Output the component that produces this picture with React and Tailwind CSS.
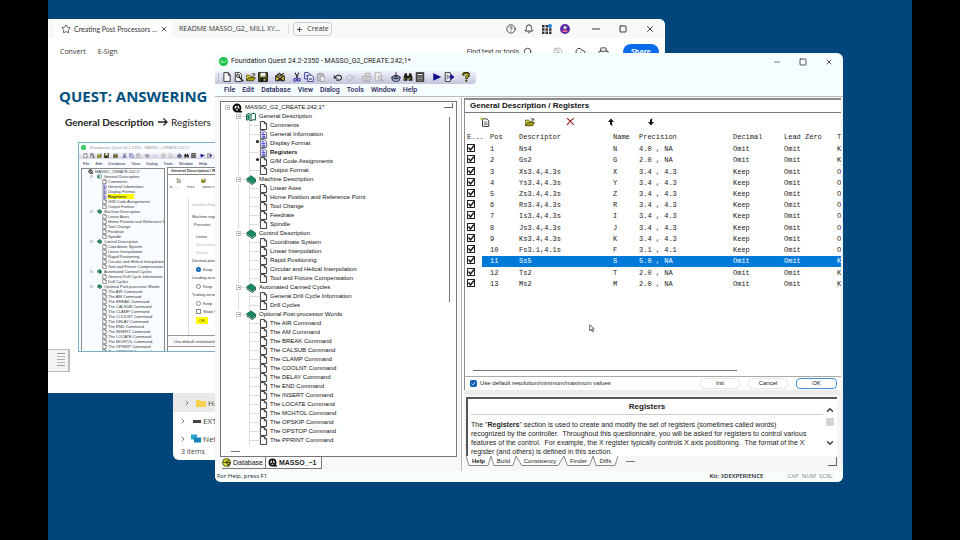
import React, { useState } from 'react';
import { Star, X, Plus, CircleHelp, Bell, Search, Save, CloudUpload, Printer, Minus, Square, ChevronRight, ChevronUp, ChevronDown } from 'lucide-react';

const TREE = [
  {
    label: 'General Description',
    open: true,
    items: [
      { label: 'Comments' },
      { label: 'General Information', filled: true },
      { label: 'Display Format', filled: true, mark: true },
      { label: 'Registers', filled: true, active: true },
      { label: 'G/M Code Assignments', mark: true },
      { label: 'Output Format' },
    ],
  },
  {
    label: 'Machine Description',
    items: [
      { label: 'Linear Axes' },
      { label: 'Home Position and Reference Point' },
      { label: 'Tool Change' },
      { label: 'Feedrate' },
      { label: 'Spindle' },
    ],
  },
  {
    label: 'Control Description',
    items: [
      { label: 'Coordinate System' },
      { label: 'Linear Interpolation' },
      { label: 'Rapid Positioning' },
      { label: 'Circular and Helical Interpolation' },
      { label: 'Tool and Fixture Compensation' },
    ],
  },
  {
    label: 'Automated Canned Cycles',
    items: [{ label: 'General Drill Cycle Information' }, { label: 'Drill Cycles' }],
  },
  {
    label: 'Optional Post-processor Words',
    items: ['AIR', 'AM', 'BREAK', 'CALSUB', 'CLAMP', 'COOLNT', 'DELAY', 'END', 'INSERT', 'LOCATE', 'MCHTOL', 'OPSKIP', 'OPSTOP', 'PPRINT'].map(
      (word) => ({ label: `The ${word} Command` })
    ),
  },
];

const REGISTERS = [
  ['1', 'Ns4', 'N', '4.0 , NA', 'Omit', 'Omit', 'K'],
  ['2', 'Gs2', 'G', '2.0 , NA', 'Omit', 'Omit', 'K'],
  ['3', 'Xs3.4,4.3s', 'X', '3.4 , 4.3', 'Keep', 'Omit', 'O'],
  ['4', 'Ys3.4,4.3s', 'Y', '3.4 , 4.3', 'Keep', 'Omit', 'O'],
  ['5', 'Zs3.4,4.3s', 'Z', '3.4 , 4.3', 'Keep', 'Omit', 'O'],
  ['6', 'Rs3.4,4.3s', 'R', '3.4 , 4.3', 'Keep', 'Omit', 'O'],
  ['7', 'Is3.4,4.3s', 'I', '3.4 , 4.3', 'Keep', 'Omit', 'O'],
  ['8', 'Js3.4,4.3s', 'J', '3.4 , 4.3', 'Keep', 'Omit', 'O'],
  ['9', 'Ks3.4,4.3s', 'K', '3.4 , 4.3', 'Keep', 'Omit', 'O'],
  ['10', 'Fs3.1,4.1s', 'F', '3.1 , 4.1', 'Keep', 'Omit', 'O'],
  ['11', 'Ss5', 'S', '5.0 , NA', 'Omit', 'Omit', 'K'],
  ['12', 'Ts2', 'T', '2.0 , NA', 'Omit', 'Omit', 'K'],
  ['13', 'Ms2', 'M', '2.0 , NA', 'Omit', 'Omit', 'K'],
];

const ICONS = {
  new: <path d="M3 1h7l3 3v11H3zM10 1v4h3" fill="#fff" stroke="#222" strokeWidth="1.4" />,
  wizard: (
    <>
      <path d="M2 1h7l3 3v11H2z" fill="#fff" stroke="#222" strokeWidth="1.4" />
      <circle cx="6.5" cy="6" r="2.6" fill="#bbb" stroke="#222" strokeWidth="1.3" />
      <path d="M8 8l7 7" stroke="#222" strokeWidth="2.2" />
    </>
  ),
  open: (
    <>
      <path d="M1 14V5h5l1 2h5v2" fill="#e8e04a" stroke="#444400" strokeWidth="1.2" />
      <path d="M1 14l3-5h11l-3 5z" fill="#a8a010" stroke="#333300" strokeWidth="1.2" />
      <path d="M9 3q3-2 5 2m0 0V2m0 3h-3" fill="none" stroke="#222" strokeWidth="1.2" />
    </>
  ),
  save: (
    <>
      <path d="M1 1h14v14H1z" fill="#5c5c18" stroke="#111" strokeWidth="1.6" />
      <path d="M4 1h8v6H4z" fill="#eee" />
      <path d="M4 10h8v5H4z" fill="#111" />
      <path d="M9 11h2v3H9z" fill="#eee" />
    </>
  ),
  database: (
    <>
      <path d="M1 14V6h14v8z" fill="#c9b634" stroke="#222" strokeWidth="1.5" />
      <path d="M3 5l4-3 3 3 4-3M2 7l11 7M13 7L4 14" stroke="#222" strokeWidth="1.8" fill="none" />
    </>
  ),
  cut: (
    <>
      <path d="M5 1l4 9M11 1L7 10" stroke="#223" strokeWidth="1.8" />
      <circle cx="5" cy="12.5" r="2.2" fill="none" stroke="#2a2a9c" strokeWidth="1.7" />
      <circle cx="11" cy="12.5" r="2.2" fill="none" stroke="#2a2a9c" strokeWidth="1.7" />
    </>
  ),
  copy: (
    <>
      <path d="M1 1h6l3 3v7H1z" fill="#fff" stroke="#28288a" strokeWidth="1.4" />
      <path d="M6 5h6l3 3v7H6z" fill="#fff" stroke="#28288a" strokeWidth="1.4" />
      <path d="M3 5h3M3 7h3M8 10h5M8 12h5" stroke="#28288a" />
    </>
  ),
  paste: (
    <>
      <path d="M2 3h10v11H2z" fill="#c4c4cc" stroke="#999" strokeWidth="1.4" />
      <path d="M5 1h4v3H5z" fill="#aaa" />
      <path d="M7 7h7v8H7z" fill="#eee" stroke="#999" strokeWidth="1.2" />
    </>
  ),
  undo: <path d="M2 5v5h5M3 9q4-6 9-3 4 4-1 7H5" fill="none" stroke="#333" strokeWidth="1.7" />,
  redo: <path d="M14 5v5H9M13 9Q9 3 4 6q-4 4 1 7h6" fill="none" stroke="#b8b8c4" strokeWidth="1.5" />,
  print: <path d="M4 7l2-5h7l-2 5M1 7h13v6H1zM4 10h7M3 15h9" fill="#ddd" stroke="#aaa" strokeWidth="1.4" />,
  preview: (
    <>
      <path d="M2 1h8l2 3v10H2z" fill="#eee" stroke="#aaa" strokeWidth="1.3" />
      <circle cx="9" cy="9" r="3" fill="#ddd" stroke="#aaa" strokeWidth="1.3" />
      <path d="M11 11l4 4" stroke="#aaa" strokeWidth="2" />
    </>
  ),
  pack: (
    <>
      <path d="M1 8l7-3 7 3-2 6-5 2-6-3z" fill="#9aa6c4" stroke="#223" strokeWidth="1.3" />
      <path d="M8 0v8M5 5l3 4 3-4M2 9l6 2 6-2" stroke="#223" strokeWidth="1.4" fill="none" />
    </>
  ),
  find: (
    <>
      <path d="M3 2h3l1 5v7H1V8zM10 2h3l2 6v6H9V7zM6 6h4v4H6z" fill="#1c1c14" />
      <path d="M3 9v3M11 9v3" stroke="#b7a83a" strokeWidth="1.6" />
    </>
  ),
  calc: (
    <>
      <path d="M2 1h12v14H2z" fill="#444" stroke="#222" strokeWidth="1.3" />
      <path d="M4 3h8v2H4z" fill="#dfe8df" />
      <path d="M4 8h2m1 0h2m1 0h2M4 10.500h2m1 0h2m1 0h2M4 13h2m1 0h2m1 0h2" stroke="#ccc" strokeWidth="1.4" />
    </>
  ),
  play: <path d="M2 2l13 6-13 6z" fill="#10108c" />,
  exit: (
    <>
      <path d="M2 1h8v14H2z" fill="#fff" stroke="#333" strokeWidth="1.5" />
      <path d="M4 4h3v8H4z" fill="#99a" />
      <path d="M6 8h5V4l5 4-5 4V8" fill="#10108c" stroke="#10108c" strokeWidth="1.2" />
    </>
  ),
  help: (
    <>
      <path d="M4 6V3q4-3 8 0v3L9 8v3" fill="none" stroke="#333300" strokeWidth="4" />
      <path d="M4.500 5.500V4q3-2 7 0v2L9 8v2" fill="none" stroke="#d8d020" strokeWidth="1.600" />
      <circle cx="8.500" cy="13.800" r="1.900" fill="#444400" />
    </>
  ),
  add: (
    <>
      <path d="M4 3h7l3 3v9H4z" fill="#fff" stroke="#333" strokeWidth="1.5" />
      <path d="M6 8h6M6 10h6M6 12h6" stroke="#555" />
      <path d="M0 3h6M3 0v6M1 1l4 4M5 1L1 5" stroke="#b9b92c" />
    </>
  ),
  remove: <path d="M2 2l12 12M14 2q-7 5-12 12" fill="none" stroke="#a01818" strokeWidth="2" />,
  up: <path d="M8 1l6 7H10v3q0 3 2 4-6 0-6-4V8H2z" fill="#111" />,
  down: <path d="M8 15l6-7H10V5q0-3 2-4-6 0-6 4v3H2z" fill="#111" />,
  page: <path d="M2.500 1h7l4 4v10h-11zM9.500 1v4h4" fill="#fff" stroke="#333" strokeWidth="1.7" />,
  pageFilled: (
    <>
      <path d="M2.500 1h7l4 4v10h-11z" fill="#e4e4ff" stroke="#555" strokeWidth="1.5" />
      <path d="M5 5h4M5 8h6M5 11h6M6 13h5" stroke="#4040d0" strokeWidth="1.7" />
    </>
  ),
  book: (
    <>
      <path d="M1 6l7-5 8 6-6 6z" fill="#168a64" stroke="#0a4a38" />
      <path d="M1 6v4l9 6 6-5V7l-6 6z" fill="#0c5a44" />
      <path d="M2 8.500l8 5.500 5-4" stroke="#d8e8e0" fill="none" />
    </>
  ),
  bookOpen: (
    <>
      <path d="M1 4q4-3 7 0 3-4 7-1v10q-4-2-7 1-3-3-7-1z" fill="#fff" stroke="#0c5a44" strokeWidth="1.6" />
      <path d="M8 4v10" stroke="#0c5a44" strokeWidth="1.600" />
      <path d="M2 5q2-2 4 0v7q-2-1-4 0z" fill="#168a64" />
    </>
  ),
  wheel: (
    <>
      <circle cx="8" cy="8" r="5.500" fill="#fff" stroke="#111" strokeWidth="3.200" />
      <path d="M8 7V3M8 8l-4 3M8 8l4 3" stroke="#111" strokeWidth="2" />
      <path d="M10 14h6" stroke="#111" strokeWidth="2.500" />
    </>
  ),
  globe: (
    <>
      <circle cx="8" cy="8" r="7" fill="#d8dc28" stroke="#444410" strokeWidth="1.500" />
      <path d="M2 7q7 2 10-4M8 8h7l-3 6z" fill="none" stroke="#44441c" strokeWidth="2" />
    </>
  ),
};

function Icon({ name, className = 'size-[10px]' }) {
  return (
    <svg viewBox="0 0 16 16" className={`shrink-0 ${className}`} fill="none" aria-hidden="true">
      {ICONS[name]}
    </svg>
  );
}

const TOOLBAR = [
  ['new', 'wizard', 'open', 'save'],
  ['database'],
  ['cut', 'copy', 'paste'],
  ['undo', 'redo'],
  ['print', 'preview'],
  ['pack', 'find', 'calc'],
  ['play', 'exit'],
  ['help'],
];

const MENUS = ['File', 'Edit', 'Database', 'View', 'Dialog', 'Tools', 'Window', 'Help'];

function QuestLogo({ className }) {
  return (
    <svg viewBox="0 0 16 16" className={className} aria-hidden="true">
      <circle cx="8" cy="8" r="8" fill="#1fbf4c" />
      <path d="M3 9c2-5 4-3 5-1s3 2 5-2M4 10h4" stroke="#c8f5d4" strokeWidth="1.500" fill="none" />
    </svg>
  );
}

/* Acrobat window */

function SlideTree() {
  return (
    <div className="min-w-0 flex-1 overflow-hidden border border-b-0 border-[#8a8a8a] pl-1 text-[4px] leading-[5px] text-[#333]">
      <div className="flex h-[5px] items-center gap-0.5 whitespace-nowrap pl-0.5">
        <Icon name="wheel" className="size-[5px]" />
        MASSO_CREATE.242:1*
      </div>
      {TREE.map((group) => (
        <div key={group.label}>
          <div className="flex h-[5px] items-center gap-0.5 whitespace-nowrap pl-1">
            <span className="size-[3px] border border-[#ccc]" />
            <Icon name={group.open ? 'bookOpen' : 'book'} className="ml-0.5 size-[5px]" />
            {group.label}
          </div>
          {group.items.map((item) => (
            <div key={item.label} className="flex h-[5px] items-center gap-px whitespace-nowrap pl-4">
              <Icon name={item.filled ? 'pageFilled' : 'page'} className="size-[5px]" />
              <span className={item.active ? 'bg-[#ffff00] pr-2 font-bold' : ''}>{item.label}</span>
            </div>
          ))}
        </div>
      ))}
    </div>
  );
}

function SlideRadio({ title, checked }) {
  return (
    <fieldset className="flex flex-col gap-1">
      <legend className="mb-1 whitespace-nowrap">{title}</legend>
      <label className="flex items-center gap-0.5 pl-1">
        <input
          type="radio"
          name={title}
          defaultChecked={checked}
          className="size-[5px] appearance-none rounded-full border border-[#888] checked:border-2 checked:border-[#1068c0]"
        />
        Keep
      </label>
    </fieldset>
  );
}

function SlideShot() {
  return (
    <div className="flex h-[210px] flex-col overflow-hidden border border-[#7fb0c6] bg-[#fafdff] font-['Liberation_Sans',sans-serif] text-[4px] leading-[5px] text-[#333]">
      <div className="flex h-2 shrink-0 items-center gap-1 whitespace-nowrap pl-0.5 text-[#999]">
        <QuestLogo className="size-[5px]" />
        Foundation Quest 24.1-2330 - MASSO_CREATE.242:1*
      </div>
      <div className="flex h-2 shrink-0 items-center gap-1 bg-gradient-to-b from-white to-[#d5d5ea] pl-1">
        {TOOLBAR.map((group) => (
          <span key={group[0]} className="flex gap-0.5">
            {group.map((name) => (
              <Icon key={name} name={name} className="size-[5px]" />
            ))}
          </span>
        ))}
      </div>
      <div className="flex h-2 shrink-0 items-center gap-1.5 pl-1 text-[#22224c]">
        {MENUS.map((menu) => (
          <span key={menu}>{menu}</span>
        ))}
      </div>
      <div className="flex min-h-0 flex-1 gap-0.5 pl-0.5">
        <div className="flex w-[84px] shrink-0 pt-px">
          <SlideTree />
        </div>
        <div className="flex min-w-0 flex-1 flex-col border-l border-t border-[#888] bg-white">
          <div className="border-b border-[#888] pl-[3px] leading-[6px] font-bold whitespace-nowrap">General Description / Registers</div>
          <div className="flex h-[10px] items-center gap-5 pl-2">
            <Icon name="add" className="size-[5px]" />
            <Icon name="open" className="size-[5px]" />
          </div>
          <div className="flex gap-2 pl-0.5 font-['Liberation_Mono',monospace] whitespace-nowrap">
            <span>E...</span>
            <span>Pos</span>
            <span>Descriptor</span>
          </div>
          <div className="mt-2 ml-5 flex flex-1 flex-col gap-[3px] overflow-hidden border-l border-[#ddd] pt-1 pl-[3px] whitespace-nowrap">
            <div className="text-[#aaa]">Initialize Register</div>
            <div className="mt-1">Machine registers</div>
            <div className="pl-0.5">Precision</div>
            <div className="mt-1 pl-1">Linear</div>
            <div className="pl-1 text-[#bbb]">Secondary</div>
            <div className="pl-1 text-[#bbb]">Rotary</div>
            <SlideRadio title="Decimal point" checked />
            <SlideRadio title="Leading zeros" />
            <SlideRadio title="Trailing zeros" />
            <label className="flex items-center gap-0.5 pl-1">
              <input type="checkbox" className="size-[5px] appearance-none border border-[#888]" />
              Show V
            </label>
            <div className="ml-1 w-3 shrink-0 bg-[#ffff00] text-center leading-[7px]">OK</div>
          </div>
          <label className="flex h-[12px] shrink-0 items-center gap-0.5 border-y border-[#999] bg-[#fafafa] pl-1 whitespace-nowrap">
            <input type="checkbox" defaultChecked className="size-1 appearance-none bg-[#0b62b8]" />
            Use default resolution/minimum
          </label>
          <div className="h-1 shrink-0" />
        </div>
      </div>
    </div>
  );
}

function AcrobatWindow() {
  return (
    <section className="absolute top-[19px] right-[247px] bottom-[147px] left-0 flex flex-col overflow-hidden rounded-r-md bg-white font-['Open_Sans',sans-serif] text-[#333]">
      <header className="flex h-[19px] shrink-0 items-center bg-[#f8f8f8] pt-px text-[7px]">
        <div className="ml-1.5 flex h-full w-[118px] items-center bg-white pl-[7px]">
          <Star className="size-[10px] shrink-0" strokeWidth={1.8} />
          <span className="ml-[3px] flex-1 font-['Lato',sans-serif] whitespace-nowrap">Creating Post Processors ...</span>
          <button aria-label="Close tab" className="mr-1 shrink-0">
            <X className="size-2" strokeWidth={2.5} />
          </button>
        </div>
        <span className="w-[117px] border-r border-[#ddd] pl-[7px] whitespace-nowrap">README MASSO_G2_ MILL XY...</span>
        <button className="ml-1 flex h-[14px] w-[39px] items-center justify-center gap-1 rounded-sm border border-[#ccc]">
          <Plus className="size-[7px]" strokeWidth={3} />
          Create
        </button>
        <div className="ml-auto flex items-center gap-2 pr-[10px]">
          <button aria-label="Help"><CircleHelp className="size-[10px]" strokeWidth={2} /></button>
          <button aria-label="Notifications"><Bell className="size-[10px]" strokeWidth={2.4} /></button>
          <button aria-label="Apps">
            <svg viewBox="0 0 10 10" className="size-[10px]" fill="#333">
              <path d="M0 1h2.500v2.500H0zM3.500 1h2.500v2.500H3.500zM0 4.200h2.500v2.500H0zM3.500 4.200h2.500v2.500H3.500zM7 4.200h2.500v2.500H7zM0 7.500h2.500v2.500H0zM3.500 7.500h2.500v2.500H3.500zM7 7.500h2.500v2.500H7z" />
              <circle cx="8" cy="2" r="2" fill="#1c84e8" />
            </svg>
          </button>
          <button aria-label="Account">
            <svg viewBox="0 0 10 10" className="size-[10px]">
              <circle cx="5" cy="5" r="5" fill="#5b2ba8" />
              <circle cx="5" cy="3.500" r="1.600" fill="#d8e0d0" />
              <path d="M2 8q3-5 6 0z" fill="#e6688c" />
            </svg>
          </button>
          <button aria-label="Minimize" className="ml-3"><Minus className="size-3" strokeWidth={2} /></button>
          <button aria-label="Maximize" className="ml-[9px]"><Square className="size-2" strokeWidth={3} /></button>
          <button aria-label="Close" className="ml-[10px]"><X className="size-[10px]" strokeWidth={2.2} /></button>
        </div>
      </header>
      <div className="flex h-[28px] shrink-0 items-center text-[7px]">
        <button className="ml-3">Convert</button>
        <button className="ml-3">E-Sign</button>
        <div className="ml-auto flex items-center pr-[6px]">
          <span className="font-['Roboto',sans-serif]">Find text or tools</span>
          <Search className="ml-1 size-[10px]" />
          <Save className="ml-5 size-[10px] text-[#aaa]" />
          <CloudUpload className="ml-3 size-[11px]" />
          <Printer className="ml-3 size-[11px]" />
          <button className="ml-[14px] h-4 w-9 rounded-full bg-[#0a6cea] font-bold text-white">Share</button>
        </div>
      </div>
      <div className="mt-[20px] ml-[11px] font-['Open_Sans',sans-serif] text-[15px] leading-5 font-bold whitespace-nowrap text-[#00507f]">QUEST: ANSWERING</div>
      <p className="mt-2 ml-[17px] flex items-center font-['Lato',sans-serif] text-[10px] leading-4 whitespace-nowrap text-[#222]">
        <b>General Description</b>
        <svg viewBox="0 0 10 8" className="ml-1 h-2 w-[10px]" role="img" aria-label="to">
          <path d="M0 4h9M5.500 0.500L9 4 5.500 7.500" fill="none" stroke="#222" strokeWidth="1.300" />
        </svg>
        <span className="ml-[3px]">Registers</span>
      </p>
      <div className="flex">
        <div className="mt-[219px] h-[23px] w-[22px] shrink-0 border-y border-r-2 border-[#bbb] bg-[#f4f4f4] p-[3px]">
          <div className="ml-auto flex w-2 flex-col gap-0.5">
            <span className="h-px bg-[#999]" />
            <span className="h-px bg-[#bbb]" />
            <span className="h-px bg-[#aaa]" />
            <span className="h-px bg-[#bbb]" />
            <span className="h-px bg-[#999]" />
          </div>
        </div>
        <div className="mt-3 ml-2 w-[150px]">
          <SlideShot />
        </div>
      </div>
    </section>
  );
}

function ExplorerWindow() {
  return (
    <section className="absolute bottom-[80px] left-[125px] w-[200px] overflow-hidden rounded-b-md bg-white font-['Open_Sans',sans-serif] text-[8px] text-[#444]">
      <div className="flex h-[19px] items-center gap-0.5 bg-[#e9e9e9] pl-2.5">
        <ChevronRight className="size-2" />
        <svg viewBox="0 0 10 8" className="ml-[3px] size-[10px]">
          <path d="M0 1h4l1 1h5v6H0z" fill="#f9cf4e" />
        </svg>
        Haas
      </div>
      <div className="flex h-[18px] items-center gap-0.5 pl-1.5">
        <ChevronRight className="size-2" />
        <span className="ml-1 h-[3px] w-2 bg-[#444]" />
        <span>EXT</span>
      </div>
      <div className="flex h-[18px] items-center gap-0.5 pl-1.5">
        <ChevronRight className="size-2" />
        <svg viewBox="0 0 10 9" className="ml-0.5 size-[10px]">
          <path d="M0 0h6v5H0z" fill="#2aa7cf" />
          <path d="M3 3h7v5H3z" fill="#1583b5" />
        </svg>
        Network
      </div>
      <div className="h-3 pl-2 text-[7px] leading-[8px]">3 items</div>
    </section>
  );
}

/* Foundation Quest window */

function Expander() {
  return (
    <span className="flex size-[5px] shrink-0 items-center justify-center border border-[#c4c4c4]">
      <span className="h-px w-0.5 bg-[#888]" />
    </span>
  );
}

function ProjectTree({ active, onSelect }) {
  return (
    <div className="min-w-0 flex-1 pl-1 text-[6px] leading-[9px] whitespace-nowrap text-[#111]">
      <div className="flex h-[9px] items-center">
        <Expander />
        <Icon name="wheel" className="ml-0.5 size-[10px]" />
        <span className="ml-[3px]">MASSO_G2_CREATE.242;1*</span>
      </div>
      {TREE.map((group, index) => (
        <div key={group.label}>
          <div className="flex h-[9px] items-center pl-[11px]">
            <Expander />
            <span className="h-px w-[5px] bg-[#ddd]" />
            <Icon name={group.open ? 'bookOpen' : 'book'} className="size-[10px]" />
            <span className="ml-[3px]">{group.label}</span>
          </div>
          {group.items.map((item) => (
            <div key={item.label} className="flex h-[9px] items-center pl-[13px]">
              <span className={`h-full w-[11px] border-l ${index < TREE.length - 1 ? 'border-[#ddd]' : 'border-transparent'}`} />
              <span className="flex h-full w-[10px] items-center border-l border-[#ddd]">
                {item.mark ? <span className="mb-1 ml-auto size-[3px] rounded-full bg-[#222]" /> : <span className="h-px w-full bg-[#ddd]" />}
              </span>
              <Icon name={item.filled ? 'pageFilled' : 'page'} className="size-[9px]" />
              <button onClick={() => onSelect(item.label)} className={`ml-0.5 ${item.label === active ? 'font-bold' : ''}`}>
                {item.label}
              </button>
            </div>
          ))}
        </div>
      ))}
    </div>
  );
}

function TreePanel() {
  const [active, setActive] = useState('Registers');
  return (
    <aside className="flex w-[247px] shrink-0 flex-col border-r border-[#b5b5b5] bg-[#f8f8f8] pt-1 pr-1 pl-[5px]">
      <div className="flex flex-1 flex-col border border-[#777] bg-white pt-px">
        <div className="flex">
          <ProjectTree active={active} onSelect={setActive} />
          <div className="flex w-3 flex-col">
            <span className="h-[5px] w-[9px] border-r border-b border-[#666]" />
            <span className="mt-[9px] ml-[5px] h-[185px] w-px bg-[#777]" />
          </div>
        </div>
        <div className="mt-1.5 ml-2.5 h-px w-[9px] bg-[#777]" />
      </div>
      <div className="flex h-3 items-stretch text-[7px] leading-[11px]">
        <button className="ml-0.5 flex items-center gap-0.5 border-r border-b border-[#777] pr-0.5">
          <Icon name="globe" className="size-[9px]" />
          Database
        </button>
        <button className="flex items-center gap-0.5 border-r border-b border-[#777] bg-white pr-1 pl-0.5 font-bold">
          <Icon name="wheel" className="size-[9px]" />
          MASSO_~1
        </button>
      </div>
      <div className="h-0.5" />
    </aside>
  );
}

function CheckMark() {
  return (
    <svg viewBox="0 0 8 8" className="pointer-events-none absolute inset-0 size-2" aria-hidden="true">
      <path d="M1.500 3.500l2 2.500L7 1.500" fill="none" stroke="#222" strokeWidth="1.500" />
    </svg>
  );
}

function RegisterTable() {
  const [selected, setSelected] = useState('11');
  return (
    <table className="h-[160px] w-full table-fixed border-collapse text-left font-['Liberation_Mono',monospace] text-[7px] leading-[9px] whitespace-nowrap text-[#222]">
      <colgroup>
        <col className="w-[15px]" />
        <col className="w-[37px]" />
        <col className="w-[94px]" />
        <col className="w-[26px]" />
        <col className="w-[94px]" />
        <col className="w-[51px]" />
        <col className="w-[53px]" />
        <col />
      </colgroup>
      <thead>
        <tr className="h-[14px]">
          <th className="font-normal">E...</th>
          <th className="pl-2 font-normal">Pos</th>
          <th className="font-normal">Descriptor</th>
          <th className="font-normal">Name</th>
          <th className="font-normal">Precision</th>
          <th className="font-normal">Decimal</th>
          <th className="font-normal">Lead Zero</th>
          <th className="font-normal">T</th>
        </tr>
      </thead>
      <tbody>
        {REGISTERS.map(([pos, ...cells]) => (
          <tr key={pos} onClick={() => setSelected(pos)} className={pos === selected ? 'text-white' : ''}>
            <td className="pb-[3px]">
              <span className="relative block size-2">
                <input type="checkbox" defaultChecked aria-label={`Enable register ${pos}`} className="block size-2 appearance-none border border-[#222] bg-white" />
                <CheckMark />
              </span>
            </td>
            <td className={`pl-2 ${pos === selected ? 'bg-[#007ad9]' : ''}`}>{pos}</td>
            {cells.map((cell, i) => (
              <td key={i} className={pos === selected ? 'bg-[#007ad9]' : ''}>{cell}</td>
            ))}
          </tr>
        ))}
      </tbody>
    </table>
  );
}

function RegistersPane() {
  return (
    <div className="flex min-h-0 flex-1 flex-col overflow-hidden border-t-2 border-l border-[#8d8d8d] bg-white">
      <h2 className="h-[13px] shrink-0 border-b border-[#777] pl-[5px] text-[8px] leading-[12px] font-bold text-[#111]">General Description / Registers</h2>
      <div className="flex h-[17px] shrink-0 items-center pl-[15px]">
        <button aria-label="New register" className="mr-[35px]"><Icon name="add" className="size-[10px]" /></button>
        <button aria-label="Open register" className="mr-[31px]"><Icon name="open" className="size-[10px]" /></button>
        <button aria-label="Delete register" className="mr-8"><Icon name="remove" className="size-[9px]" /></button>
        <button aria-label="Move up" className="mr-8"><Icon name="up" className="size-2" /></button>
        <button aria-label="Move down"><Icon name="down" className="size-2" /></button>
      </div>
      <div className="overflow-hidden pl-0.5">
        <RegisterTable />
      </div>
      <div className="mt-auto mb-[5px] ml-2 h-px w-[264px] bg-[#777]" />
      <div className="flex h-[14px] shrink-0 items-center gap-2 border-t border-[#aaa] pr-1 pb-px pl-[5px] text-[6px]">
        <label className="mr-auto flex items-center gap-[3px] whitespace-nowrap">
          <span className="relative block size-[7px]">
            <input type="checkbox" defaultChecked className="block size-[7px] appearance-none rounded-xs bg-[#0a5fb4]" />
            <svg viewBox="0 0 8 8" className="pointer-events-none absolute inset-0 size-[7px]" aria-hidden="true">
              <path d="M2 4l1.500 1.500L6 2.500" fill="none" stroke="#fff" />
            </svg>
          </span>
          Use default resolution/minimum/maximum values
        </label>
        <button className="h-[11px] w-10 rounded-sm border border-[#e6e6e6] bg-white leading-[9px]">Init</button>
        <button className="h-[11px] w-10 rounded-sm border border-[#e6e6e6] bg-white leading-[9px]">Cancel</button>
        <button className="h-[11px] w-[41px] rounded-sm border border-[#3f95dc] bg-white leading-[9px]">OK</button>
      </div>
    </div>
  );
}

const HELP_TABS = [
  { label: 'Help', width: 'w-[25px]' },
  { label: 'Build', width: 'w-[25px]' },
  { label: 'Consistency', width: 'w-[48px]' },
  { label: 'Finder', width: 'w-[29px]' },
  { label: 'Diffs', width: 'w-[25px]' },
];

function HelpPane() {
  return (
    <div className="h-[81px] shrink-0 border-t-[5px] border-[#ececec] bg-[#f6f6f6] pt-0.5 pr-1 pl-0.5">
      <div className="flex h-[59px] border-t-2 border-l-2 border-[#555] bg-white">
        <div className="min-w-0 flex-1 overflow-hidden pl-[3px] text-[#222]">
          <h3 className="border-b border-[#ccc] pt-0.5 pb-px text-center text-[8px] leading-[12px] font-bold">Registers</h3>
          <p className="pt-[5px] text-[7px] leading-[9px] whitespace-nowrap">
            The "<b>Registers</b>" section is used to create and modify the set of registers (sometimes called words)
            <br />
            recognized by the controller. &nbsp;Throughout this questionnaire, you will be asked for registers to control various
            <br />
            features of the control. &nbsp;For example, the X register typically controls X axis positioning. &nbsp;The format of the X
            <br />
            register (and others) is defined in this section.
          </p>
        </div>
        <div className="flex w-[14px] flex-col items-center pt-1.5 text-[#333]">
          <ChevronUp className="size-[10px]" strokeWidth={3} />
          <span className="mt-[3px] size-2 bg-[#d4d4d4]" />
          <ChevronDown className="mt-auto mb-2 size-[10px]" strokeWidth={3} />
        </div>
      </div>
      <div className="flex h-[10px] items-center text-[6px] leading-[9px]">
        {HELP_TABS.map((tab, i) => (
          <button key={tab.label} className={`relative flex h-full items-center justify-center ${tab.width} ${i === 0 ? 'font-bold' : ''}`}>
            <svg viewBox="0 0 100 10" preserveAspectRatio="none" className="absolute inset-0 size-full" aria-hidden="true">
              <path d="M0 0L12 9.500H88L100 0" fill="#fff" stroke="#888" vectorEffect="non-scaling-stroke" />
            </svg>
            <span className="relative">{tab.label}</span>
          </button>
        ))}
        <span className="ml-2 h-px w-[9px] bg-[#777]" />
        <span className="ml-auto h-[9px] w-[9px] border-r border-b border-[#666]" />
      </div>
    </div>
  );
}

function QuestWindow() {
  return (
    <section className="absolute top-[53px] right-[69px] bottom-[58px] left-[167px] flex flex-col overflow-hidden rounded-md bg-[#f6fdff] font-['Liberation_Sans',sans-serif] text-[#222]">
      <header className="flex h-[17px] shrink-0 items-center pl-1 font-['Roboto',sans-serif] text-[7px]">
        <QuestLogo className="size-[9px]" />
        <h1 className="ml-[3px] flex-1 whitespace-nowrap">Foundation Quest 24.2-2350 - MASSO_G2_CREATE.242;1*</h1>
        <div className="flex gap-[18px] pr-[10px] text-[#333]">
          <button aria-label="Minimize"><Minus className="size-2" /></button>
          <button aria-label="Maximize"><Square className="size-2" strokeWidth={2.500} /></button>
          <button aria-label="Close"><X className="size-2" strokeWidth={2.5} /></button>
        </div>
      </header>
      <div className="flex h-[14px] shrink-0">
        <div className="flex items-center gap-[5px] rounded-r-sm bg-gradient-to-b from-[#f4f8ff] to-[#c4c4dc] pr-1">
          <span className="mr-[-3px] ml-[3px] h-2 border-l border-dotted border-[#aab]" />
          {TOOLBAR.map((group) => (
            <div key={group[0]} className="flex">
              {group.map((name) => (
                <button key={name} aria-label={name} className="flex w-3 justify-center">
                  <Icon name={name} />
                </button>
              ))}
            </div>
          ))}
        </div>
      </div>
      <nav className="flex h-[12px] shrink-0 items-center gap-[7px] pl-[9px] font-['Roboto',sans-serif] text-[7px] font-medium text-[#26265c]">
        {MENUS.map((menu) => (
          <button key={menu}>{menu}</button>
        ))}
      </nav>
      <div className="flex min-h-0 flex-1 border-t border-[#bbb]">
        <TreePanel />
        <main className="ml-0.5 flex min-w-0 flex-1 flex-col overflow-hidden bg-[#f2f2f2] pt-px pr-0.5">
          <RegistersPane />
          <HelpPane />
        </main>
      </div>
      <footer className="flex h-[11px] shrink-0 items-center bg-[#f8fdfd] pl-0.5 font-['Open_Sans',sans-serif] text-[6px]">
        <span>For Help, press F1</span>
        <span className="ml-auto font-semibold">Kit: 3DEXPERIENCE</span>
        <span className="mr-[10px] ml-6 text-[#888]">CAP&nbsp; NUM&nbsp; SCRL</span>
      </footer>
    </section>
  );
}

/* Mouse pointer resting over the desktop */
function Pointer() {
  return (
    <svg viewBox="0 0 8 12" className="pointer-events-none absolute top-[324px] left-[541px] h-[9px] w-1.5" aria-hidden="true">
      <path d="M1 1v8l2-2 1.500 3.500 1.500-.7L4.500 6.500H7z" fill="#fff" stroke="#333" />
    </svg>
  );
}

function App() {
  return (
    <div className="flex h-screen bg-black px-12">
      <div className="relative flex-1 overflow-hidden bg-[#00467a]">
        <ExplorerWindow />
        <AcrobatWindow />
        <QuestWindow />
        <Pointer />
      </div>
    </div>
  );
}

export default App;
